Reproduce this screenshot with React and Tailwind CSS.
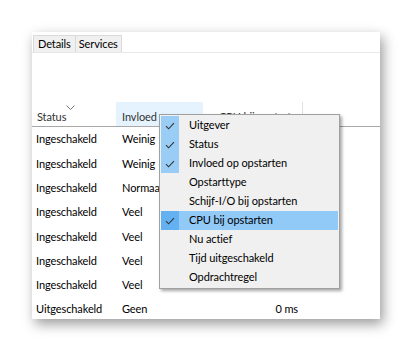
import React from 'react';

const ROWS = [
	{ status: 'Ingeschakeld', impact: 'Weinig', cpu: '' },
	{ status: 'Ingeschakeld', impact: 'Weinig', cpu: '' },
	{ status: 'Ingeschakeld', impact: 'Normaal', cpu: '' },
	{ status: 'Ingeschakeld', impact: 'Veel', cpu: '' },
	{ status: 'Ingeschakeld', impact: 'Veel', cpu: '' },
	{ status: 'Ingeschakeld', impact: 'Veel', cpu: '' },
	{ status: 'Ingeschakeld', impact: 'Veel', cpu: '' },
	{ status: 'Uitgeschakeld', impact: 'Geen', cpu: '0 ms' }
];

const MENU_ITEMS = [
	{ label: 'Uitgever', checked: true },
	{ label: 'Status', checked: true },
	{ label: 'Invloed op opstarten', checked: true },
	{ label: 'Opstarttype', checked: false },
	{ label: 'Schijf-I/O bij opstarten', checked: false },
	{ label: 'CPU bij opstarten', checked: true, active: true },
	{ label: 'Nu actief', checked: false },
	{ label: 'Tijd uitgeschakeld', checked: false },
	{ label: 'Opdrachtregel', checked: false }
];

function CheckMark() {
	return (
		<svg width="10" height="8" viewBox="0 0 10 8" fill="none">
			<path d="M1 4.2 L3.6 6.8 L9 1.2" stroke="#333" strokeWidth="1.1" />
		</svg>
	);
}

function ColumnMenu() {
	return (
		<div className="absolute left-[127px] top-[82px] w-[181px] border border-[#a0a0a0] bg-[#f0f0f0] p-px shadow-[2px_2px_3px_rgba(0,0,0,0.35)]">
			{MENU_ITEMS.map( ( item ) => (
				<div
					key={ item.label }
					className={ item.active ? 'flex h-[19px] items-center bg-[#91c9f7]' : 'flex h-[19px] items-center' }
				>
					<div
						className={
							item.active
								? 'flex h-full w-[18px] items-center justify-center bg-[#64b1f2]'
								: item.checked
									? 'flex h-full w-[18px] items-center justify-center bg-[#99cdf6]'
									: 'h-full w-[18px]'
						}
					>
						{ item.checked && <CheckMark /> }
					</div>
					<span className="pl-[10px] text-[11px] text-black">{ item.label }</span>
				</div>
			) )}
		</div>
	);
}

export default function App() {
	return (
		<div className="h-[352px] w-[412px] bg-white pl-[32px] pt-[32px] font-['Lato',sans-serif] tracking-[-0.1px]">
			<div className="relative h-[287px] w-[348px] bg-white shadow-[3px_5px_12px_rgba(0,0,0,0.4)]">
				<div className="flex h-[21px] items-end border-b border-[#e8e8e8] pl-px">
					<div className="flex h-[17px] items-center border border-b-0 border-[#dadada] bg-[#f0f0f0] px-[4px] text-[11px] text-black">
						Details
					</div>
					<div className="flex h-[17px] items-center border border-b-0 border-l-0 border-[#dadada] bg-[#f0f0f0] px-[3px] text-[11px] text-black">
						Services
					</div>
				</div>

				<div className="mt-[49px] flex h-[25px] border-b border-[#a8a8a8] text-[11px] text-[#333]">
					<div className="relative flex w-[84px] items-end pb-[1px] pl-[5px]">
						<svg className="absolute left-[34px] top-[3px]" width="9" height="5" viewBox="0 0 9 5" fill="none">
							<path d="M0.5 0.5 L4.5 4.5 L8.5 0.5" stroke="#777" strokeWidth="1" />
						</svg>
						Status
					</div>
					<div className="flex w-[87px] items-end bg-[#e5f3ff] pb-[1px] pl-[6px]">Invloed</div>
					<div className="flex w-[100px] items-end whitespace-nowrap border-r border-[#e0e0e0] pb-[1px] pl-[16px]">
						CPU bij opstarten
					</div>
				</div>

				{ROWS.map( ( row, i ) => (
					<div key={ i } className="flex h-[24.3px] items-center pt-px text-[11px] text-black">
						<div className="w-[84px] pl-[4px]">{ row.status }</div>
						<div className="w-[87px] pl-[6px]">{ row.impact }</div>
						<div className="w-[95px] text-right">{ row.cpu }</div>
					</div>
				) )}

				<ColumnMenu />
			</div>
		</div>
	);
}
